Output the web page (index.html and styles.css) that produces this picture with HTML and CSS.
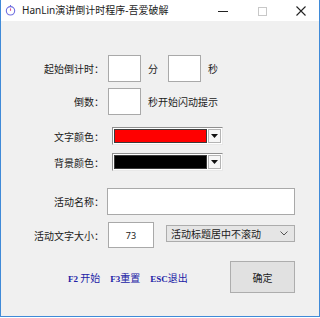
FILE: index.html
```html
<!DOCTYPE html>
<html>
<head>
<meta charset="utf-8">
<link rel="stylesheet" href="styles.css">
</head>
<body>
<div class="window">
  <div class="titlebar">
    <svg class="appicon" width="11" height="12" viewBox="0 0 11 12">
      <circle cx="5.5" cy="6.8" r="4.2" fill="none" stroke="#6d6ee0" stroke-width="1.1"/>
      <line x1="5.5" y1="1" x2="5.5" y2="2.6" stroke="#6d6ee0" stroke-width="1.1"/>
      <line x1="5.5" y1="6.8" x2="5.5" y2="4.4" stroke="#e0508a" stroke-width="1.1"/>
    </svg>
    <span class="title">HanLin演讲倒计时程序-吾爱破解</span>
    <div class="controls">
      <svg class="ctl" width="12" height="12" viewBox="0 0 12 12"><line x1="1" y1="6.5" x2="11" y2="6.5" stroke="#222" stroke-width="1"/></svg>
      <svg class="ctl" width="12" height="12" viewBox="0 0 12 12"><rect x="2.5" y="2.5" width="8" height="8" fill="none" stroke="#c8c8c8" stroke-width="1"/></svg>
      <svg class="ctl" width="12" height="12" viewBox="0 0 12 12"><path d="M1.5 1.5 L10.5 10.5 M10.5 1.5 L1.5 10.5" stroke="#222" stroke-width="1.1"/></svg>
    </div>
  </div>
  <div class="client">
    <div class="row r1">
      <span class="lbl">起始倒计时：</span>
      <span class="box w33"></span>
      <span class="unit">分</span>
      <span class="box w33 second"></span>
      <span class="unit">秒</span>
    </div>
    <div class="row r2">
      <span class="lbl">倒数：</span>
      <span class="box w33"></span>
      <span class="unit">秒开始闪动提示</span>
    </div>
    <div class="row r3">
      <span class="lbl">文字颜色：</span>
      <div class="ccombo"><span class="swatch red"></span><span class="dd"><svg width="7" height="4" viewBox="0 0 7 4"><path d="M0 0 H7 L3.5 4 Z" fill="#111"/></svg></span></div>
    </div>
    <div class="row r4">
      <span class="lbl">背景颜色：</span>
      <div class="ccombo"><span class="swatch black"></span><span class="dd"><svg width="7" height="4" viewBox="0 0 7 4"><path d="M0 0 H7 L3.5 4 Z" fill="#111"/></svg></span></div>
    </div>
    <div class="row r5">
      <span class="lbl">活动名称：</span>
      <span class="box wide"></span>
    </div>
    <div class="row r6">
      <span class="lbl">活动文字大小：</span>
      <span class="box w46">73</span>
      <div class="select"><span>活动标题居中不滚动</span><svg width="8" height="5" viewBox="0 0 8 5"><path d="M0.5 0.5 L4 4 L7.5 0.5" fill="none" stroke="#555" stroke-width="1"/></svg></div>
    </div>
    <div class="row r7">
      <div class="links">
        <span><b>F2</b> 开始</span>
        <span><b>F3</b>重置</span>
        <span><b>ESC</b>退出</span>
      </div>
      <div class="btn">确定</div>
    </div>
  </div>
</div>
</body>
</html>
```

FILE: styles.css
```css
html, body {
  margin: 0;
  padding: 0;
  background: #ffffff;
}
body {
  font-family: "Noto Sans CJK SC", "Noto Sans", sans-serif;
  font-size: 10px;
  color: #1a1a1a;
}
.window {
  width: 320px;
  height: 317px;
  box-sizing: border-box;
  border: 1px solid #3f8ad8;
  border-top: none;
  display: flex;
  flex-direction: column;
  background: #f0f0f0;
}
.titlebar {
  height: 21px;
  background: #ffffff;
  display: flex;
  align-items: center;
  padding-left: 4px;
}
.appicon {
  display: block;
  margin-top: -1px;
}
.title {
  margin-left: 6px;
  font-size: 10px;
  color: #222;
  line-height: 21px;
  font-family: "Noto Sans", "Noto Sans CJK SC", sans-serif;
}
.controls {
  margin-left: auto;
  display: flex;
  align-items: center;
  height: 21px;
}
.ctl {
  display: block;
  margin-right: 27px;
}
.ctl:first-child {
  margin-right: 27px;
}
.ctl:last-child {
  margin-right: 12px;
}
.client {
  flex: 1;
  display: flex;
  flex-direction: column;
}
.row {
  display: flex;
  align-items: center;
}
.lbl {
  width: 103px;
  flex: none;
  text-align: right;
  margin-right: 4px;
  white-space: nowrap;
}
.box {
  display: flex;
  align-items: center;
  justify-content: center;
  box-sizing: border-box;
  background: #ffffff;
  border: 1px solid #a9a9a9;
  height: 100%;
  font-family: "Noto Sans", sans-serif;
  font-size: 9px;
  color: #222;
}
.w33 { width: 33px; }
.w46 { width: 46px; }
.wide { width: 188px; margin-left: -1px; }
.unit {
  margin-left: 7px;
  white-space: nowrap;
}
.second { margin-left: 10px; }
.r1 { margin-top: 34px; height: 27px; }
.r2 { margin-top: 6px; height: 27px; }
.r3 { margin-top: 12px; height: 18px; }
.r4 { margin-top: 8px; height: 18px; }
.r5 { margin-top: 17px; height: 27px; }
.r6 { margin-top: 7px; height: 26px; }
.r7 { margin-top: 13px; height: 32px; }
.ccombo {
  margin-left: 4px;
  width: 111px;
  height: 18px;
  box-sizing: border-box;
  border: 1px solid;
  border-color: #8f8f8f #e8e8e8 #e8e8e8 #8f8f8f;
  background: #ffffff;
  display: flex;
  padding: 1px;
  gap: 1px;
}
.swatch {
  flex: 1;
  border: 1px solid #3a3a3a;
}
.red { background: #ff0000; }
.black { background: #000000; }
.dd {
  width: 13px;
  box-sizing: border-box;
  border: 1px solid #b4b4b4;
  background: #f6f6f6;
  display: flex;
  align-items: center;
  justify-content: center;
}
.dd svg { display: block; }
.select {
  margin-left: 12px;
  width: 129px;
  height: 17px;
  box-sizing: border-box;
  border: 1px solid #acacac;
  background: #e5e5e5;
  display: flex;
  align-items: center;
  padding-left: 4px;
  padding-right: 6px;
  justify-content: space-between;
  margin-top: -3px;
}
.select svg { display: block; }
.links {
  margin-left: 67px;
  display: flex;
  gap: 10px;
  color: #2222a6;
  white-space: nowrap;
}
.links b {
  font-family: "Liberation Serif", serif;
  font-size: 9px;
  font-weight: bold;
}
.btn {
  margin-left: auto;
  margin-right: 24px;
  width: 65px;
  height: 32px;
  box-sizing: border-box;
  border: 1px solid #adadad;
  background: #e1e1e1;
  display: flex;
  align-items: center;
  justify-content: center;
  color: #1a1a1a;
}
```
